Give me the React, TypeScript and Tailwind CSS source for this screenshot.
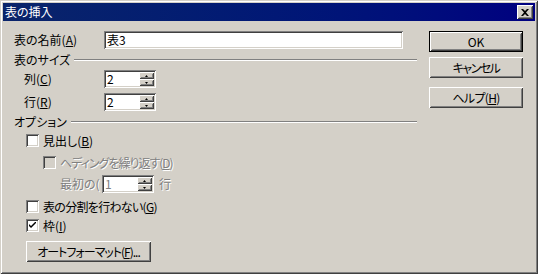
import React from "react";

const FONT = "font-['Noto_Sans_CJK_JP','Noto_Sans',sans-serif] [font-feature-settings:'palt']";
const SUNKEN =
  "shadow-[inset_1px_1px_#808080,inset_-1px_-1px_#ffffff,inset_2px_2px_#404040,inset_-2px_-2px_#d4d0c8]";
const RAISED =
  "shadow-[inset_1px_1px_#ffffff,inset_-1px_-1px_#404040,inset_2px_2px_#d4d0c8,inset_-2px_-2px_#808080]";

function Mn({ children }: { children: React.ReactNode }) {
  return <span className="underline underline-offset-[1px]">{children}</span>;
}

function Checkbox({ checked = false, disabled = false }: { checked?: boolean; disabled?: boolean }) {
  return (
    <div
      className={`w-[13px] h-[13px] shrink-0 flex items-center justify-center ${SUNKEN} ${
        disabled ? "bg-[#d4d0c8]" : "bg-white"
      }`}
    >
      {checked && (
        <svg width="7" height="7" viewBox="0 0 7 7">
          <path d="M0 2 L0 4 L2 6 L7 1 L7 -1 L2 4 Z" fill="#000" />
        </svg>
      )}
    </div>
  );
}

function Arrow({ up }: { up: boolean }) {
  return (
    <svg width="3" height="2" viewBox="0 0 3 2">
      {up ? <polygon points="1.5,0 3,2 0,2" fill="#000" /> : <polygon points="0,0 3,0 1.5,2" fill="#000" />}
    </svg>
  );
}

function Spin({ value, disabled = false }: { value: string; disabled?: boolean }) {
  return (
    <div className={`w-[52px] h-[18px] flex p-[2px] bg-white ${SUNKEN}`}>
      <div
        className={`flex-1 flex items-center pl-[1px] text-[12px] leading-none ${
          disabled ? "text-[#808080]" : "text-black"
        }`}
      >
        {value}
      </div>
      <div className="w-[15px] flex flex-col">
        <div className={`flex-1 bg-[#d4d0c8] flex items-center justify-center ${RAISED}`}>
          <Arrow up />
        </div>
        <div className={`flex-1 bg-[#d4d0c8] flex items-center justify-center ${RAISED}`}>
          <Arrow up={false} />
        </div>
      </div>
    </div>
  );
}

function GroupHeader({ title, className = "" }: { title: string; className?: string }) {
  return (
    <div className={`flex items-center h-[14px] ${className}`}>
      <span className="text-[12px] leading-[14px]">{title}</span>
      <div className="flex-1 ml-[4px] h-[2px] border-t border-t-[#808080] border-b border-b-white" />
    </div>
  );
}

function Button({ children, isDefault = false, className = "" }: { children: React.ReactNode; isDefault?: boolean; className?: string }) {
  const inner = (
    <div className={`flex-1 h-full flex items-center justify-center bg-[#d4d0c8] ${RAISED} text-[12px] leading-none`}>
      {children}
    </div>
  );
  return isDefault ? (
    <div className={`flex border border-black ${className}`}>{inner}</div>
  ) : (
    <div className={`flex ${className}`}>{inner}</div>
  );
}

const DIS = "text-[#808080] [text-shadow:1px_1px_0_#ffffff]";

export default function App() {
  return (
    <div
      className={`w-[538px] h-[274px] bg-[#d4d0c8] p-[3px] flex flex-col text-black ${FONT} shadow-[inset_1px_1px_#d4d0c8,inset_-1px_-1px_#404040,inset_2px_2px_#ffffff,inset_-2px_-2px_#808080]`}
    >
      {/* Title bar */}
      <div className="h-[18px] flex items-center bg-gradient-to-r from-[#0a246a] to-[#000080] pl-[2px] pr-[2px]">
        <span className="text-white text-[12px] leading-none flex-1">表の挿入</span>
        <div className={`w-[16px] h-[14px] bg-[#d4d0c8] flex items-center justify-center ${RAISED}`}>
          <svg width="8" height="7" viewBox="0 0 8 7">
            <path d="M0 0 L2 0 L4 2 L6 0 L8 0 L5 3.5 L8 7 L6 7 L4 5 L2 7 L0 7 L3 3.5 Z" fill="#000" />
          </svg>
        </div>
      </div>

      {/* Body */}
      <div className="flex-1 flex pl-[11px] pt-[10px] pr-[12px] text-[12px]">
        {/* Left column */}
        <div className="w-[403px] flex flex-col">
          <div className="flex items-center h-[18px]">
            <span className="w-[90px] leading-none">
              表の名前(<Mn>A</Mn>)
            </span>
            <div className={`w-[299px] h-[18px] bg-white flex items-center pl-[3px] ${SUNKEN}`}>
              <span className="leading-none">表3</span>
            </div>
          </div>

          <GroupHeader title="表のサイズ" className="mt-[4px]" />

          <div className="flex items-center mt-[3px] pl-[10px]">
            <span className="w-[80px] leading-none">
              列(<Mn>C</Mn>)
            </span>
            <Spin value="2" />
          </div>
          <div className="flex items-center mt-[5px] pl-[10px]">
            <span className="w-[80px] leading-none">
              行(<Mn>R</Mn>)
            </span>
            <Spin value="2" />
          </div>

          <GroupHeader title="オプション" className="mt-[4px]" />

          <div className="flex items-center mt-[5px] pl-[12px] gap-[4px]">
            <Checkbox />
            <span className="leading-none">
              見出し(<Mn>B</Mn>)
            </span>
          </div>
          <div className="flex items-center mt-[9px] pl-[29px] gap-[4px]">
            <Checkbox disabled />
            <span className={`leading-none tracking-[-1px] ${DIS}`}>
              ヘディングを繰り返す(<Mn>D</Mn>)
            </span>
          </div>
          <div className="flex items-center mt-[6px] pl-[46px]">
            <span className={`w-[42px] leading-none ${DIS}`}>最初の(</span>
            <Spin value="1" disabled />
            <span className={`ml-[5px] leading-none ${DIS}`}>行</span>
          </div>
          <div className="flex items-center mt-[7px] pl-[12px] gap-[4px]">
            <Checkbox />
            <span className="leading-none tracking-[-0.7px]">
              表の分割を行わない(<Mn>G</Mn>)
            </span>
          </div>
          <div className="flex items-center mt-[6px] pl-[12px] gap-[4px]">
            <Checkbox checked />
            <span className="leading-none">
              枠(<Mn>I</Mn>)
            </span>
          </div>
          <div className="mt-[9px] pl-[12px]">
            <Button className="w-[125px] h-[21px]">
              <span className="tracking-[-1px]">
                オートフォーマット(<Mn>F</Mn>)...
              </span>
            </Button>
          </div>
        </div>

        {/* Right column */}
        <div className="ml-[12px] w-[94px] flex flex-col">
          <Button isDefault className="h-[21px]">
            OK
          </Button>
          <Button className="h-[21px] mt-[5px]">
            <span className="tracking-[-1.5px]">キャンセル</span>
          </Button>
          <Button className="h-[21px] mt-[9px]">
            <span className="tracking-[-0.7px]">
              ヘルプ(<Mn>H</Mn>)
            </span>
          </Button>
        </div>
      </div>
    </div>
  );
}
